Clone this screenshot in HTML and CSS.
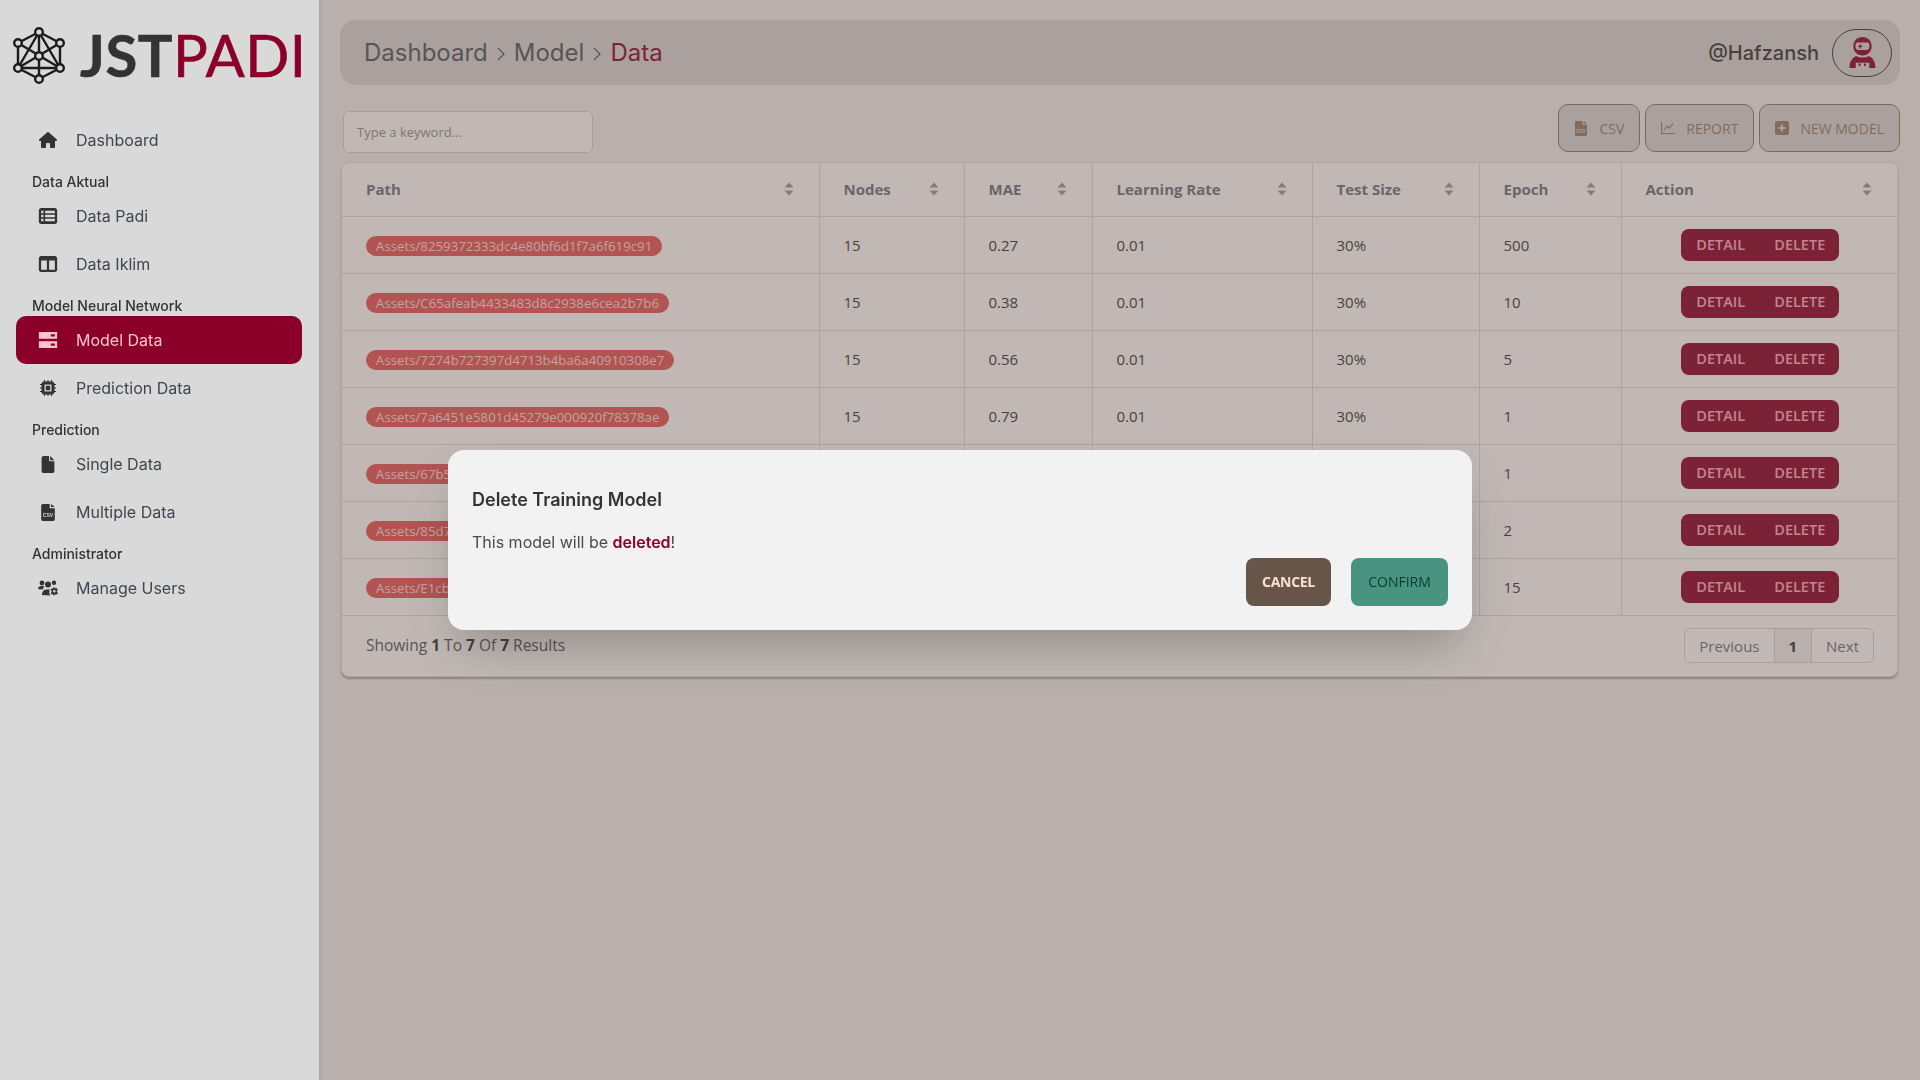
FILE: index.html
```html
<!DOCTYPE html>
<html lang="en">
<head>
  <meta charset="UTF-8">
  <title>JSTPADI - Model Data</title>
  <link rel="stylesheet" href="styles.css">
</head>
<body>
  <svg class="icon-sheet" xmlns="http://www.w3.org/2000/svg">
    <symbol id="sort" viewBox="0 0 10 14">
      <path d="M5 0.5 9.5 5.5H0.5Z"/>
      <path d="M5 13.5 0.5 8.5H9.5Z"/>
    </symbol>
    <symbol id="file-csv" viewBox="0 0 16 20">
      <path d="M2 0H10V5H16V18C16 19.1 15.1 20 14 20H2C.9 20 0 19.1 0 18V2C0 .9 .9 0 2 0ZM11.5 0 16 3.6H11.5Z"/>
      <text x="8" y="15.5" text-anchor="middle" class="csv-label">CSV</text>
    </symbol>
  </svg>

  <aside class="sidebar">
    <div class="brand">
      <svg class="brand-mark" viewBox="9 26 60 60" xmlns="http://www.w3.org/2000/svg">
        <g fill="none" stroke="#1c1c1c" stroke-width="2.4">
          <path d="M39 32 60 43V68L39 79 18 68V43Z"/>
          <path d="M39 32V79M39 32 18 68M39 32 60 68M18 43 60 68M60 43 18 68M18 68H60"/>
          <g fill="#d9d9d9">
            <circle cx="39" cy="32" r="3.8"/>
            <circle cx="18" cy="43" r="3.8"/>
            <circle cx="60" cy="43" r="3.8"/>
            <circle cx="39" cy="56" r="3.8"/>
            <circle cx="18" cy="68" r="3.8"/>
            <circle cx="60" cy="68" r="3.8"/>
            <circle cx="39" cy="79" r="3.8"/>
          </g>
        </g>
      </svg>
      <span class="brand-name"><b>JST</b><span>PADI</span></span>
    </div>

    <ul class="menu">
      <li class="menu-item">
        <svg class="menu-icon" viewBox="0 0 576 512"><path d="M575.8 255.5c0 18-15 32.1-32 32.1h-32l.7 160.2c0 2.7-.2 5.4-.5 8.1V472c0 22.1-17.9 40-40 40H456c-1.1 0-2.2 0-3.3-.1c-1.4 .1-2.8 .1-4.2 .1H416 392c-22.1 0-40-17.9-40-40V448 384c0-17.7-14.3-32-32-32H256c-17.7 0-32 14.3-32 32v64 24c0 22.1-17.9 40-40 40H160 128.1c-1.5 0-3-.1-4.5-.2c-1.2 .1-2.4 .2-3.6 .2H104c-22.1 0-40-17.9-40-40V360c0-.9 0-1.9 .1-2.8V287.6H32c-18 0-32-14-32-32.1c0-9 3-17 10-24L266.4 8c7-7 15-8 22-8s15 2 21 7L564.8 231.5c8 7 12 15 11 24z"/></svg>
        Dashboard
      </li>
      <li class="menu-title">Data Aktual</li>
      <li class="menu-item">
        <svg class="menu-icon" viewBox="0 0 16 14"><path fill-rule="evenodd" d="M2 0H14C15.1 0 16 .9 16 2V12C16 13.1 15.1 14 14 14H2C.9 14 0 13.1 0 12V2C0 .9 .9 0 2 0ZM2 2.5V4.5H4V2.5ZM2 6V8H4V6ZM2 9.5V11.5H4V9.5ZM5.5 2.5V4.5H14V2.5ZM5.5 6V8H14V6ZM5.5 9.5V11.5H14V9.5Z"/></svg>
        Data Padi
      </li>
      <li class="menu-item">
        <svg class="menu-icon" viewBox="0 0 16 14"><path fill-rule="evenodd" d="M2 0H14C15.1 0 16 .9 16 2V12C16 13.1 15.1 14 14 14H2C.9 14 0 13.1 0 12V2C0 .9 .9 0 2 0ZM2 4V12H7V4ZM9 4V12H14V4Z"/></svg>
        Data Iklim
      </li>
      <li class="menu-title">Model Neural Network</li>
      <li class="menu-item menu-item-active">
        <svg class="menu-icon" viewBox="0 0 16 14"><path fill-rule="evenodd" d="M0 0H16V6H0ZM0 8H16V14H0ZM10.5 2V4H14V2ZM10.5 10V12H14V10Z"/></svg>
        Model Data
      </li>
      <li class="menu-item">
        <svg class="menu-icon" viewBox="0 0 16 16"><path fill-rule="evenodd" d="M4 0H5V1.5H7.5V0H8.5V1.5H11V0H12V1.5C13.4 1.5 14.5 2.6 14.5 4H16V5H14.5V7.5H16V8.5H14.5V11H16V12H14.5C14.5 13.4 13.4 14.5 12 14.5V16H11V14.5H8.5V16H7.5V14.5H5V16H4V14.5C2.6 14.5 1.5 13.4 1.5 12H0V11H1.5V8.5H0V7.5H1.5V5H0V4H1.5C1.5 2.6 2.6 1.5 4 1.5ZM4.5 4.5V11.5H11.5V4.5ZM5.8 5.8H10.2V10.2H5.8Z"/></svg>
        Prediction Data
      </li>
      <li class="menu-title">Prediction</li>
      <li class="menu-item">
        <svg class="menu-icon menu-icon-file" viewBox="0 0 12 16"><path d="M2 0H7V4C7 4.6 7.4 5 8 5H12V14C12 15.1 11.1 16 10 16H2C.9 16 0 15.1 0 14V2C0 .9 .9 0 2 0ZM8 0 12 4H8Z"/></svg>
        Single Data
      </li>
      <li class="menu-item">
        <svg class="menu-icon menu-icon-file"><use href="#file-csv"/></svg>
        Multiple Data
      </li>
      <li class="menu-title">Administrator</li>
      <li class="menu-item">
        <svg class="menu-icon" viewBox="0 0 20 16">
          <circle cx="4" cy="3" r="2.4"/>
          <path d="M0 9C0 6.8 1.6 6 3 6H5C5.6 6 6.2 6.2 6.6 6.5 5.6 7.2 5 8.4 5 9.5Z"/>
          <circle cx="10" cy="4.5" r="3"/>
          <path d="M4 15C4 11.6 6 9.5 8.5 9.5H11C11.3 9.5 11.6 9.6 11.9 9.6 11 11.6 11 13.5 12.2 15.4Z"/>
          <circle cx="16" cy="2.8" r="2.2"/>
          <path fill-rule="evenodd" d="M15.3 7.5H17.2L17.5 8.8 18.8 8.2 19.9 9.7 19 10.7 19 11.9 20 12.9 19 14.4 17.6 13.9 17.2 15.3H15.3L15 13.9 13.6 14.4 12.6 12.9 13.6 11.9 13.6 10.7 12.6 9.7 13.7 8.2 15 8.8ZM16.3 10A1.3 1.3 0 1 0 16.3 12.6 1.3 1.3 0 1 0 16.3 10Z"/>
        </svg>
        Manage Users
      </li>
    </ul>
  </aside>

  <main class="content">
    <header class="topbar">
      <nav class="breadcrumb">
        <span>Dashboard</span>
        <svg class="crumb-arrow" viewBox="0 0 8 14"><path d="M1 1 7 7 1 13"/></svg>
        <span>Model</span>
        <svg class="crumb-arrow" viewBox="0 0 8 14"><path d="M1 1 7 7 1 13"/></svg>
        <span class="crumb-current">Data</span>
      </nav>
      <div class="user">
        <span class="user-name">@Hafzansh</span>
        <button class="avatar">
          <svg viewBox="0 0 28 32" class="avatar-icon">
            <path fill-rule="evenodd" d="M14 0C19.5 0 23.5 4 23.5 9.5S19.5 19 14 19 4.5 15 4.5 9.5 8.500 0 14 0ZM9 5.500C7.500 5.500 6.800 6.500 6.800 8.500V10C6.800 12 8 13.500 10 13.500H18C20 13.500 21.200 12 21.200 10V8.500C21.200 6.500 20.500 5.500 19 5.500Z"/>
            <path d="M11 7.500H12.300V9H13.800V10.300H12.300V11.800H11V10.300H9.500V9H11Z"/>
            <path fill-rule="evenodd" d="M7.500 19.500C9 20.700 11.400 21.300 14 21.300S19 20.700 20.500 19.500C24.500 21 27.500 25.500 27.500 32H21V26.500H7V32H.5C.5 25.500 3.500 21 7.500 19.500Z"/>
            <path d="M10 27.500H12V30H10ZM15.500 27.500H17.500V30H15.500Z"/>
          </svg>
        </button>
      </div>
    </header>

    <section class="toolbar">
      <input class="search" type="text" placeholder="Type a keyword...">
      <div class="actions">
        <button class="tool-btn">
          <svg class="tool-icon tool-icon-file"><use href="#file-csv"/></svg>
          CSV
        </button>
        <button class="tool-btn">
          <svg class="tool-icon" viewBox="0 0 16 14"><path d="M.7 0V13.300H16" fill="none" stroke="currentColor" stroke-width="1.300"/><path d="M3.500 9 7 4.800 9.500 7 14 2" fill="none" stroke="currentColor" stroke-width="1.300"/></svg>
          REPORT
        </button>
        <button class="tool-btn">
          <svg class="tool-icon" viewBox="0 0 14 14"><path fill-rule="evenodd" d="M2 0H12C13.100 0 14 .9 14 2V12C14 13.100 13.100 14 12 14H2C.9 14 0 13.100 0 12V2C0 .9 .9 0 2 0ZM6 3.500V6H3.500V8H6V10.500H8V8H10.500V6H8V3.500Z"/></svg>
          NEW MODEL
        </button>
      </div>
    </section>

    <section class="table-card">
      <table class="data-table">
        <colgroup>
          <col class="col-path"><col class="col-nodes"><col class="col-mae"><col class="col-rate"><col class="col-test"><col class="col-epoch"><col>
        </colgroup>
        <thead>
          <tr>
            <th><div class="th-inner">Path<svg class="sort-icon"><use href="#sort"/></svg></div></th>
            <th><div class="th-inner">Nodes<svg class="sort-icon"><use href="#sort"/></svg></div></th>
            <th><div class="th-inner">MAE<svg class="sort-icon"><use href="#sort"/></svg></div></th>
            <th><div class="th-inner">Learning Rate<svg class="sort-icon"><use href="#sort"/></svg></div></th>
            <th><div class="th-inner">Test Size<svg class="sort-icon"><use href="#sort"/></svg></div></th>
            <th><div class="th-inner">Epoch<svg class="sort-icon"><use href="#sort"/></svg></div></th>
            <th><div class="th-inner">Action<svg class="sort-icon"><use href="#sort"/></svg></div></th>
          </tr>
        </thead>
        <tbody>
          <tr>
            <td><span class="badge">Assets/8259372333dc4e80bf6d1f7a6f619c91</span></td>
            <td>15</td><td>0.27</td><td>0.01</td><td>30%</td><td>500</td>
            <td class="cell-action"><div class="btn-group"><button>DETAIL</button><button>DELETE</button></div></td>
          </tr>
          <tr>
            <td><span class="badge">Assets/C65afeab4433483d8c2938e6cea2b7b6</span></td>
            <td>15</td><td>0.38</td><td>0.01</td><td>30%</td><td>10</td>
            <td class="cell-action"><div class="btn-group"><button>DETAIL</button><button>DELETE</button></div></td>
          </tr>
          <tr>
            <td><span class="badge">Assets/7274b727397d4713b4ba6a40910308e7</span></td>
            <td>15</td><td>0.56</td><td>0.01</td><td>30%</td><td>5</td>
            <td class="cell-action"><div class="btn-group"><button>DETAIL</button><button>DELETE</button></div></td>
          </tr>
          <tr>
            <td><span class="badge">Assets/7a6451e5801d45279e000920f78378ae</span></td>
            <td>15</td><td>0.79</td><td>0.01</td><td>30%</td><td>1</td>
            <td class="cell-action"><div class="btn-group"><button>DETAIL</button><button>DELETE</button></div></td>
          </tr>
          <tr>
            <td><span class="badge">Assets/67b5</span></td>
            <td></td><td></td><td></td><td></td><td>1</td>
            <td class="cell-action"><div class="btn-group"><button>DETAIL</button><button>DELETE</button></div></td>
          </tr>
          <tr>
            <td><span class="badge">Assets/85d7</span></td>
            <td></td><td></td><td></td><td></td><td>2</td>
            <td class="cell-action"><div class="btn-group"><button>DETAIL</button><button>DELETE</button></div></td>
          </tr>
          <tr>
            <td><span class="badge">Assets/E1cb</span></td>
            <td></td><td></td><td></td><td></td><td>15</td>
            <td class="cell-action"><div class="btn-group"><button>DETAIL</button><button>DELETE</button></div></td>
          </tr>
        </tbody>
      </table>
      <footer class="table-footer">
        <span>Showing <b>1</b> To <b>7</b> Of <b>7</b> Results</span>
        <div class="pagination">
          <span class="page-item">Previous</span>
          <span class="page-item page-item-active">1</span>
          <span class="page-item">Next</span>
        </div>
      </footer>
    </section>
  </main>

  <!-- Modal konfirmasi hapus -->
  <div class="modal-overlay">
    <div class="modal">
      <h3 class="modal-title">Delete Training Model</h3>
      <p class="modal-text">This model will be <strong>deleted</strong>!</p>
      <div class="modal-actions">
        <button class="btn-cancel">CANCEL</button>
        <button class="btn-confirm">CONFIRM</button>
      </div>
    </div>
  </div>
</body>
</html>
```

FILE: styles.css
```css
* {
  box-sizing: border-box;
}
body {
  margin: 0;
  height: 1080px;
  overflow: hidden;
  display: flex;
  font-family: "Open Sans", sans-serif;
  background-color: #f2f2f2;
  color: #333;
}
button {
  font-family: inherit;
  cursor: pointer;
}
.icon-sheet {
  display: none;
}
.csv-label {
  font-family: "Liberation Sans", sans-serif;
  font-size: 6px;
  font-weight: 700;
  fill: #d9d9d9;
}

/* Sidebar */
.sidebar {
  position: relative;
  z-index: 20;
  width: 319px;
  flex-shrink: 0;
  background-color: #d9d9d9;
  box-shadow: 3px 0 0 rgba(0, 0, 0, 0.03);
  font-family: Inter, sans-serif;
}
.brand {
  display: flex;
  align-items: center;
  gap: 11px;
  padding: 26px 0 0 9px;
  height: 86px;
}
.brand-mark {
  width: 60px;
  height: 60px;
  flex-shrink: 0;
}
.brand-name {
  margin-top: -2px;
  font-family: Lato, sans-serif;
  font-size: 58px;
  line-height: 60px;
  letter-spacing: 0.5px;
  color: #8a0028;
  -webkit-text-stroke: 0.6px #8a0028;
}
.brand-name b {
  font-weight: 700;
  color: #333;
  -webkit-text-stroke: 0.6px #333;
}
.menu {
  list-style: none;
  margin: 30px 0 0;
  padding: 0 16px;
}
.menu-title {
  height: 28px;
  padding: 8px 0 0 16px;
  font-size: 14px;
  line-height: 20px;
  font-weight: 500;
  color: #333;
}
.menu-item {
  display: flex;
  align-items: center;
  gap: 18px;
  height: 48px;
  width: 286px;
  padding-left: 22px;
  border-radius: 10px;
  font-size: 16px;
  color: #3f4650;
}
.menu-item-active {
  background-color: #8a0028;
  color: #ffc2d4;
}
.menu-icon {
  width: 20px;
  height: 16px;
  flex-shrink: 0;
  fill: #333;
}
.menu-item-active .menu-icon {
  fill: #ffc2d4;
}
.menu-icon-file {
  height: 17px;
}

/* Main */
.content {
  flex: 1;
  min-width: 0;
  padding: 20px 20px 0 21px;
}
.topbar {
  display: flex;
  align-items: center;
  justify-content: space-between;
  height: 65px;
  padding: 0 8px 0 24px;
  border-radius: 16px;
  background-color: #d9d9d9;
}
.breadcrumb {
  display: flex;
  align-items: center;
  gap: 9px;
  margin-top: -1px;
  font-family: Inter, sans-serif;
  font-size: 24px;
  color: #4b5563;
}
.crumb-arrow {
  width: 8px;
  height: 14px;
  margin-top: 4px;
  fill: none;
  stroke: #4b5563;
  stroke-width: 1.3;
}
.crumb-current {
  color: #8a0028;
}
.user {
  display: flex;
  align-items: center;
  gap: 13px;
}
.user-name {
  font-family: Inter, sans-serif;
  font-size: 20px;
  font-weight: 500;
  color: #333;
}
.avatar {
  display: flex;
  align-items: center;
  justify-content: center;
  width: 60px;
  height: 48px;
  padding: 0;
  border: 1px solid #333;
  border-radius: 24px;
  background: transparent;
}
.avatar-icon {
  width: 27px;
  height: 31px;
  fill: #8a0028;
}

.toolbar {
  display: flex;
  align-items: flex-end;
  justify-content: space-between;
  margin-top: 19px;
  padding-left: 3px;
}
.search {
  width: 250px;
  height: 42px;
  margin-bottom: -1px;
  padding: 0 13px;
  border: 1px solid #d4d0d0;
  border-radius: 6px;
  background-color: #fff;
  font-family: "Open Sans", sans-serif;
  font-size: 13px;
}
.search::placeholder {
  color: #8f8f8f;
}
.actions {
  display: flex;
  gap: 5px;
}
.tool-btn {
  display: flex;
  align-items: center;
  gap: 11px;
  height: 48px;
  padding: 0 15px;
  border: 1px solid #957560;
  border-radius: 10px;
  background-color: #d9d9d9;
  font-size: 14px;
  font-weight: 500;
  color: #957b6a;
}
.tool-icon {
  width: 14px;
  height: 14px;
  fill: currentColor;
}
.tool-icon-file {
  height: 15px;
}

/* Tabel */
.table-card {
  margin: 10px 2px 0 1px;
  border: 1px solid #e4e2e2;
  border-radius: 8px;
  background-color: #fff;
  box-shadow: 0 2px 2px rgba(0, 0, 0, 0.3);
}
.data-table {
  width: 100%;
  table-layout: fixed;
  border-collapse: collapse;
  font-size: 15px;
}
.col-path { width: 477px; }
.col-nodes { width: 145px; }
.col-mae { width: 128px; }
.col-rate { width: 220px; }
.col-test { width: 167px; }
.col-epoch { width: 142px; }
.data-table th,
.data-table td {
  padding: 0 24px;
  border-bottom: 1px solid #dfdcdc;
  border-left: 1px solid #dfdcdc;
  text-align: left;
}
.data-table th:first-child,
.data-table td:first-child {
  border-left: none;
}
.data-table th {
  height: 53px;
  font-weight: 700;
  color: #6b7280;
}
.data-table td {
  height: 57px;
}
.th-inner {
  display: flex;
  align-items: center;
  justify-content: space-between;
}
.sort-icon {
  width: 10px;
  height: 14px;
  margin-right: 1px;
  fill: #9a9a9a;
}
.badge {
  display: inline-block;
  height: 20px;
  margin-top: 2px;
  padding: 0 10px;
  border-radius: 10px;
  background-color: #e65557;
  font-size: 13.25px;
  line-height: 20px;
  color: #ffdcdc;
}
.data-table .cell-action {
  padding: 0 23px 0 25px;
  text-align: center;
}
.btn-group {
  display: inline-flex;
  height: 32px;
  border-radius: 8px;
  background-color: #8a0028;
  overflow: hidden;
}
.btn-group button {
  width: 79px;
  padding: 0;
  border: none;
  background: transparent;
  font-size: 14.5px;
  font-weight: 600;
  color: #ffa8c0;
}
.table-footer {
  display: flex;
  align-items: center;
  justify-content: space-between;
  height: 60px;
  padding: 0 23px 2px 24px;
  font-size: 15.5px;
  color: #4b5563;
}
.table-footer b {
  color: #333;
}
.pagination {
  display: flex;
  height: 35px;
  margin-top: 2px;
  border: 1px solid #d6d3d3;
  border-radius: 6px;
  font-size: 15px;
}
.page-item {
  display: flex;
  align-items: center;
  padding: 0 14px;
  border-left: 1px solid #d6d3d3;
  color: #6b7280;
}
.page-item:first-child {
  border-left: none;
}
.page-item-active {
  font-weight: 700;
  color: #333;
  background-color: #f2f2f2;
}

/* Modal */
.modal-overlay {
  position: fixed;
  inset: 0;
  z-index: 10;
  display: flex;
  align-items: center;
  justify-content: center;
  background-color: rgba(105, 83, 75, 0.41);
}
.modal {
  display: flex;
  flex-direction: column;
  width: 1024px;
  height: 180px;
  padding: 24px;
  border-radius: 16px;
  background-color: #f2f2f2;
  box-shadow: 0 25px 50px -12px rgba(0, 0, 0, 0.25);
  font-family: Inter, sans-serif;
}
.modal-title {
  margin: 15px 0 0;
  font-size: 18px;
  line-height: 22px;
  font-weight: 600;
  color: #333;
}
.modal-text {
  margin: 20px 0 0;
  font-size: 16px;
  line-height: 22px;
  color: #4a4a4a;
}
.modal-text strong {
  font-weight: 600;
  color: #8a0028;
}
.modal-actions {
  display: flex;
  justify-content: flex-end;
  gap: 20px;
  margin-top: auto;
}
.modal-actions button {
  height: 48px;
  padding: 0 0 2px;
  border: none;
  border-radius: 8px;
  font-family: "Open Sans", sans-serif;
  font-size: 14px;
}
.btn-cancel {
  width: 85px;
  background-color: #68554a;
  font-weight: 700;
  letter-spacing: -0.3px;
  color: #fde0cc;
}
.btn-confirm {
  width: 97px;
  background-color: #489480;
  color: #0c3b2e;
}
```
